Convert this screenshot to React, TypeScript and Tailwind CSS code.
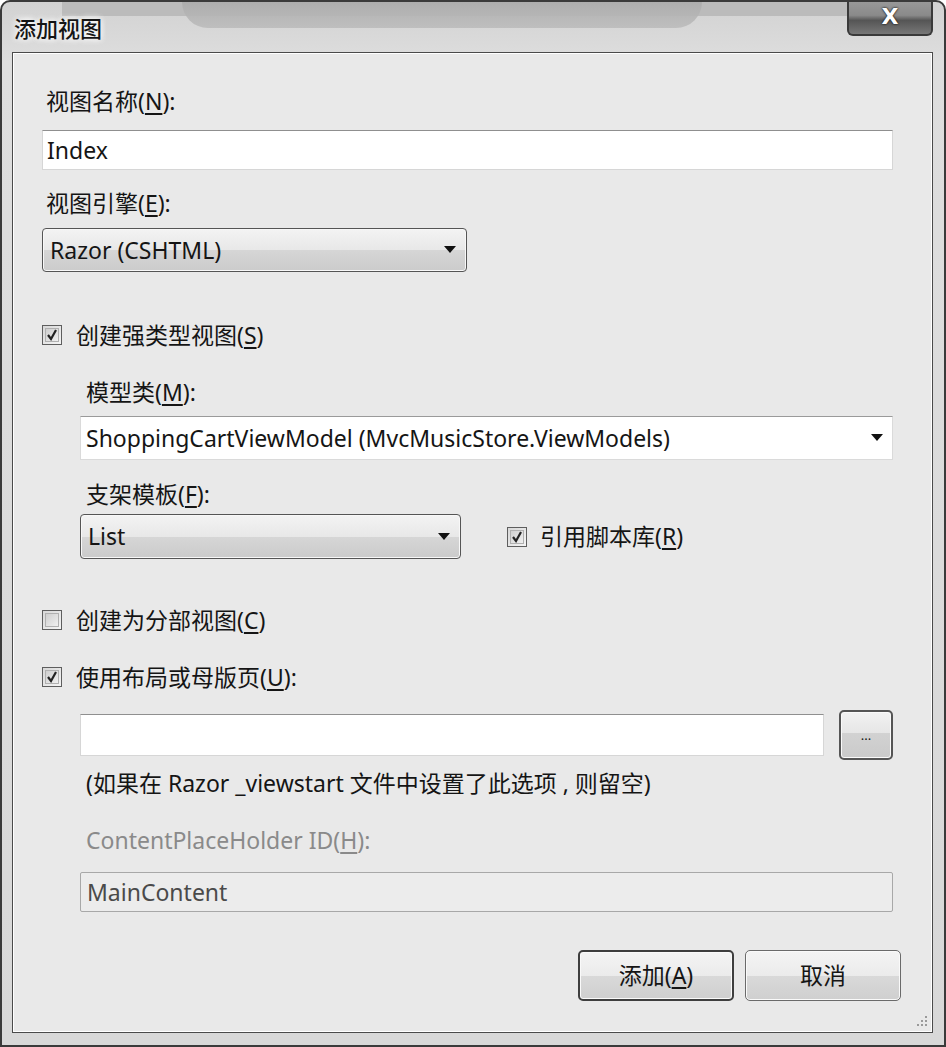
import React from "react";

const F = { fontFamily: '"Noto Sans", "Noto Sans CJK SC", sans-serif' };

function Arrow() {
  return (
    <svg width="12" height="8" viewBox="0 0 12 8" className="shrink-0">
      <path d="M0 0 L12 0 L6 7 Z" fill="#111" />
    </svg>
  );
}

function Check({ checked }: { checked: boolean }) {
  return (
    <div className="w-[20px] h-[20px] border border-[#5e5e5e] bg-gradient-to-br from-[#d8d8d8] to-[#f4f4f4] p-[2px] shrink-0">
      <div className="w-full h-full border border-[#b0b0b0] bg-gradient-to-br from-[#cfcfcf] to-[#f0f0f0] flex items-center justify-center">
        {checked && (
          <svg width="12" height="12" viewBox="0 0 12 12">
            <path d="M2 6 L5 10 L10 1" stroke="#222" strokeWidth="2.2" fill="none" />
          </svg>
        )}
      </div>
    </div>
  );
}

function Label({ children, className = "" }: { children: React.ReactNode; className?: string }) {
  return <div className={`h-[30px] leading-[30px] text-[23px] whitespace-nowrap ${className}`}>{children}</div>;
}

function U({ children }: { children: React.ReactNode }) {
  return <span className="underline underline-offset-[3px]">{children}</span>;
}

function Dropdown({ text, className = "" }: { text: string; className?: string }) {
  return (
    <div
      className={`h-[44px] rounded-[4px] border border-[#555] shadow-[inset_0_0_0_1px_#f8f8f8] bg-[linear-gradient(to_bottom,#f3f3f3_0%,#e8e8e8_50%,#d6d6d6_51%,#cbcbcb_100%)] flex items-center justify-between pl-[7px] pr-[10px] text-[23px] ${className}`}
    >
      <span>{text}</span>
      <Arrow />
    </div>
  );
}

function Button({ children, def = false }: { children: React.ReactNode; def?: boolean }) {
  return (
    <div
      className={`w-[156px] h-[51px] rounded-[5px] border ${def ? "border-[#3e3e3e] border-2" : "border-[#6a6a6a]"} shadow-[inset_0_0_0_1px_#fafafa] bg-[linear-gradient(to_bottom,#f4f4f4_0%,#ebebeb_50%,#d9d9d9_51%,#cfcfcf_100%)] flex items-center justify-center text-[23px]`}
    >
      {children}
    </div>
  );
}

export default function App() {
  return (
    <div style={F} className="w-[946px] h-[1047px] bg-white text-[#151515]">
      <div className="relative w-[946px] h-[1047px] rounded-t-[10px] border-2 border-[#3a3a3a] bg-[linear-gradient(to_bottom,#d2d2d2_0px,#dedede_60px,#d8d8d8_100%)] flex flex-col overflow-hidden">
        {/* title bar */}
        <div className="h-[50px] shrink-0 flex items-start relative">
          <div className="absolute left-[60px] top-0 w-[790px] h-[14px] bg-[#b8b8b8] opacity-90" />
          <div className="absolute left-[180px] top-0 w-[520px] h-[26px] rounded-b-[80px] bg-[linear-gradient(to_bottom,#acacac,#bcbcbc)] opacity-90" />
          <div className="relative pl-[12px] pt-[10px] text-[22px] leading-[30px] font-medium [text-shadow:0_0_6px_#fff,0_0_6px_#fff]" style={{ fontFamily: '"Noto Sans CJK SC", sans-serif' }}>添加视图</div>
          <div className="absolute right-[11px] top-[-2px] w-[86px] h-[36px] rounded-b-[6px] border-2 border-t-0 border-[#3a3a3a] bg-[linear-gradient(to_bottom,#9a9a9a_0%,#8a8a8a_45%,#555_60%,#777_100%)] flex items-center justify-center">
            <span className="text-white font-bold text-[22px] leading-none [text-shadow:0_0_2px_#222,0_0_2px_#222]" style={{ fontFamily: '"DejaVu Sans", sans-serif' }}>X</span>
          </div>
        </div>
        {/* content panel */}
        <div className="ml-[10px] mr-[11px] mb-[12px] flex-1 border border-[#4a4a4a] shadow-[inset_0_0_0_1px_#fff] bg-[#e9e9e9] flex flex-col relative">
          <div className="pl-[29px] pr-[39px] flex flex-col">
            <Label className="mt-[33px] pl-[4px]">视图名称(<U>N</U>):</Label>
            <div className="mt-[14px] h-[40px] bg-white border border-[#d6d6d6] border-t-[#8f8f8f] flex items-center pl-[4px] text-[23px]">Index</div>
            <Label className="mt-[18px] pl-[4px]">视图引擎(<U>E</U>):</Label>
            <Dropdown text="Razor (CSHTML)" className="mt-[10px] w-[425px]" />
            <div className="mt-[48px] h-[30px] flex items-center gap-[14px]">
              <Check checked />
              <span className="text-[23px]">创建强类型视图(<U>S</U>)</span>
            </div>
            <div className="pl-[38px] flex flex-col">
              <Label className="mt-[27px] pl-[6px]">模型类(<U>M</U>):</Label>
              <div className="mt-[9px] h-[44px] bg-white border border-[#dadada] border-t-[#9a9a9a] flex items-center justify-between pl-[5px] pr-[9px] text-[23px]">
                <span>ShoppingCartViewModel (MvcMusicStore.ViewModels)</span>
                <Arrow />
              </div>
              <Label className="mt-[19px] pl-[6px]">支架模板(<U>F</U>):</Label>
              <div className="mt-[5px] flex items-center">
                <Dropdown text="List" className="w-[381px] h-[45px]" />
                <div className="ml-[46px] flex items-center gap-[13px]">
                  <Check checked />
                  <span className="text-[23px]">引用脚本库(<U>R</U>)</span>
                </div>
              </div>
            </div>
            <div className="mt-[46px] h-[30px] flex items-center gap-[14px]">
              <Check checked={false} />
              <span className="text-[23px]">创建为分部视图(<U>C</U>)</span>
            </div>
            <div className="mt-[27px] h-[30px] flex items-center gap-[14px]">
              <Check checked />
              <span className="text-[23px]">使用布局或母版页(<U>U</U>):</span>
            </div>
            <div className="pl-[38px] flex flex-col">
              <div className="mt-[18px] h-[50px] flex items-center">
                <div className="flex-1 h-[42px] bg-white border border-[#d6d6d6] border-t-[#8f8f8f]" />
                <div className="ml-[15px] w-[54px] h-[50px] rounded-[5px] border-2 border-[#555] shadow-[inset_0_0_0_1px_#fafafa] bg-[linear-gradient(to_bottom,#f2f2f2_0%,#e6e6e6_45%,#d2d2d2_46%,#cacaca_100%)] flex items-center justify-center text-[13px] leading-none">
                  ...
                </div>
              </div>
              <Label className="mt-[8px] pl-[6px]">(如果在 Razor _viewstart 文件中设置了此选项 , 则留空)</Label>
              <Label className="mt-[27px] pl-[6px] text-[#8a8a8a]">ContentPlaceHolder ID(<U>H</U>):</Label>
              <div className="mt-[17px] h-[40px] bg-[#ececec] border border-[#a8a8a8] rounded-[2px] flex items-center pl-[6px] text-[23px] text-[#4a4a4a]">
                MainContent
              </div>
            </div>
            <div className="mt-[38px] flex justify-end gap-[11px] mr-[-8px]">
              <Button def>添加(<U>A</U>)</Button>
              <Button>取消</Button>
            </div>
          </div>
          {/* resize grip */}
          <svg className="absolute right-[4px] bottom-[4px]" width="14" height="14" viewBox="0 0 14 14">
            {[
              [11, 2], [11, 6], [7, 6], [11, 10], [7, 10], [3, 10],
            ].map(([x, y], i) => (
              <rect key={i} x={x} y={y} width="2" height="2" fill="#9a9a9a" />
            ))}
          </svg>
        </div>
      </div>
    </div>
  );
}
